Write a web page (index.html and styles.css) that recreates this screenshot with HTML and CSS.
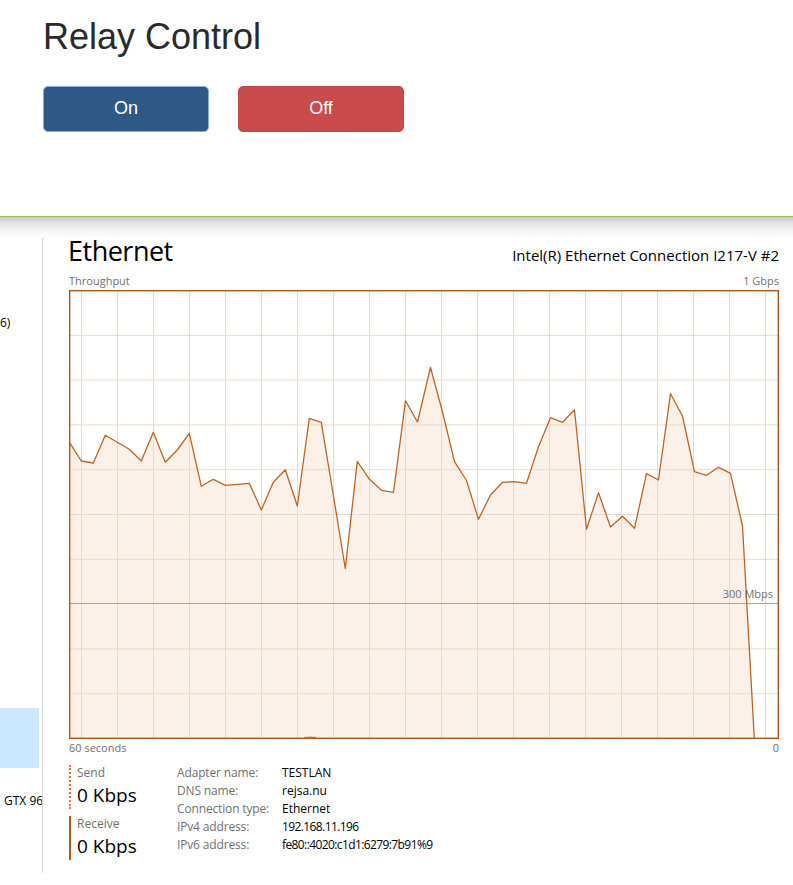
FILE: index.html
```html
<!DOCTYPE html>
<html lang="en">
<head>
<meta charset="utf-8">
<title>Relay Control</title>
<link rel="stylesheet" href="styles.css">
</head>
<body>
<section class="relay">
  <h1 class="relay-title">Relay Control</h1>
  <div class="relay-buttons">
    <button class="btn btn-on">On</button>
    <button class="btn btn-off">Off</button>
  </div>
</section>
<section class="tm">
  <div class="tm-body">
    <aside class="tm-side">
      <div class="side-text side-first">6)</div>
      <div class="side-selected"></div>
      <div class="side-text side-gpu">GTX 960</div>
    </aside>
    <main class="tm-main">
      <div class="tm-header">
        <div class="tm-title">Ethernet</div>
        <div class="tm-device">Intel(R) Ethernet Connection I217-V #2</div>
      </div>
      <div class="tm-axis tm-axis-top"><span>Throughput</span><span>1 Gbps</span></div>
      <svg class="tm-chart" width="710" height="450" viewBox="69 290 710 450" xmlns="http://www.w3.org/2000/svg">
        <rect x="69" y="290" width="710" height="450" fill="#ffffff"/>
        <polygon fill="#fcf1e8" points="69,441.7 81.3,461 93.3,463 105.3,435.3 117.3,442.3 129.3,449.3 141.3,461 153.3,432.3 165.3,462.3 177.3,450 189.3,433.3 201.3,486.3 213.3,479.3 225.3,485.3 237.3,484.3 249.3,483.3 261.3,510 273.3,482.3 285.3,469.7 297.3,506 309.3,418.3 321.3,422.3 333.3,495 345.3,568.5 357.3,461.5 369.5,479.3 381.5,490.3 393.5,492.3 405.5,400.7 417.5,422 430.5,367.5 442.5,412 454.5,461.7 466.5,480.5 478.5,519.3 490.5,495 502.5,482.3 514.5,481.7 526.5,483.3 538.5,446.7 550.5,417.7 562.5,422.3 574.5,409.7 586.5,529.3 598.5,492.7 610.5,527 622.5,516.3 634.5,528.3 646.5,473.7 658.5,480 670.5,393.7 682.5,416 694.5,471.7 706.5,475.3 718.5,467.3 730.5,473.3 742.5,526 754.3,738.5 69,738.5"/>
        <g stroke="#ead9c8" stroke-width="1" fill="none">
          <path d="M81.5 290V739M117.5 290V739M153.5 290V739M189.5 290V739M225.5 290V739M261.5 290V739M297.5 290V739M333.5 290V739M369.5 290V739M405.5 290V739M441.5 290V739M477.5 290V739M513.5 290V739M549.5 290V739M585.5 290V739M621.5 290V739M657.5 290V739M693.5 290V739M729.5 290V739M765.5 290V739"/>
          <path d="M69 335.3H779M69 380.1H779M69 424.9H779M69 469.7H779M69 514.5H779M69 559.3H779M69 648.9H779M69 693.7H779"/>
        </g>
        <path d="M69 603.5H779" stroke="#d59a6c" stroke-width="1.2" fill="none"/>
        <polyline fill="none" stroke="#c0641c" stroke-width="1.3" stroke-linejoin="round" points="69,441.7 81.3,461 93.3,463 105.3,435.3 117.3,442.3 129.3,449.3 141.3,461 153.3,432.3 165.3,462.3 177.3,450 189.3,433.3 201.3,486.3 213.3,479.3 225.3,485.3 237.3,484.3 249.3,483.3 261.3,510 273.3,482.3 285.3,469.7 297.3,506 309.3,418.3 321.3,422.3 333.3,495 345.3,568.5 357.3,461.5 369.5,479.3 381.5,490.3 393.5,492.3 405.5,400.7 417.5,422 430.5,367.5 442.5,412 454.5,461.7 466.5,480.5 478.5,519.3 490.5,495 502.5,482.3 514.5,481.7 526.5,483.3 538.5,446.7 550.5,417.7 562.5,422.3 574.5,409.7 586.5,529.3 598.5,492.7 610.5,527 622.5,516.3 634.5,528.3 646.5,473.7 658.5,480 670.5,393.7 682.5,416 694.5,471.7 706.5,475.3 718.5,467.3 730.5,473.3 742.5,526 754.3,738.5"/>
        <path d="M304 737.6Q310 736.6 316 737.6" stroke="#e07a34" stroke-width="1.2" fill="none"/>
        <rect x="69.7" y="290.7" width="708.6" height="447.6" fill="none" stroke="#b3560f" stroke-width="1.4"/>
        <text x="773" y="598" text-anchor="end" class="chart-label">300 Mbps</text>
      </svg>
      <div class="tm-axis tm-axis-bottom"><span>60 seconds</span><span>0</span></div>
      <div class="tm-stats">
        <div class="tm-rates">
          <div class="rate rate-send">
            <div class="rate-label">Send</div>
            <div class="rate-value">0 Kbps</div>
          </div>
          <div class="rate rate-recv">
            <div class="rate-label">Receive</div>
            <div class="rate-value">0 Kbps</div>
          </div>
        </div>
        <dl class="tm-details">
          <dt>Adapter name:</dt><dd>TESTLAN</dd>
          <dt>DNS name:</dt><dd>rejsa.nu</dd>
          <dt>Connection type:</dt><dd>Ethernet</dd>
          <dt>IPv4 address:</dt><dd class="num">192.168.11.196</dd>
          <dt>IPv6 address:</dt><dd class="num">fe80::4020:c1d1:6279:7b91%9</dd>
        </dl>
      </div>
    </main>
  </div>
</section>
</body>
</html>
```

FILE: styles.css
```css
html, body {
  margin: 0;
  padding: 0;
  background: #ffffff;
}

body {
  width: 793px;
  height: 885px;
  overflow: hidden;
}

.relay {
  height: 217px;
  box-sizing: border-box;
  padding: 17px 43px 0;
  border-bottom: 1px solid #8ec84a;
  font-family: "Liberation Sans", Arial, sans-serif;
}

.relay-title {
  margin: 0;
  font-size: 36px;
  line-height: 39.6px;
  font-weight: 400;
  color: #2a2a2a;
}

.relay-buttons {
  display: flex;
  gap: 29px;
  margin-top: 29px;
}

.btn {
  width: 166px;
  height: 46px;
  box-sizing: border-box;
  border-radius: 5px;
  font-family: "Liberation Sans", Arial, sans-serif;
  font-size: 18px;
  color: #ffffff;
  padding: 0;
}

.btn-on {
  background: #2e5886;
  border: 1px solid #89a9e6;
}

.btn-off {
  background: #c94b4b;
  border: 1px solid #c44545;
}

.tm {
  height: 668px;
  padding-top: 21px;
  box-sizing: border-box;
  background: linear-gradient(#c9c9c9 0px, #e2e2e2 6px, #f4f4f4 13px, #ffffff 22px);
  font-family: "Open Sans", "Noto Sans", sans-serif;
  color: #000000;
}

.tm-body {
  display: flex;
  height: 635px;
}

.tm-side {
  width: 42px;
  flex: none;
  border-right: 1px solid #dadada;
  overflow: hidden;
  padding-top: 77px;
  box-sizing: content-box;
}

.side-text {
  font-size: 12px;
  line-height: 16px;
  white-space: nowrap;
  color: #000;
}

.side-selected {
  width: 39px;
  height: 60px;
  margin-top: 377px;
  background: #cce8ff;
}

.side-gpu {
  margin-top: 25px;
  padding-left: 4px;
}

.tm-main {
  width: 710px;
  padding-left: 26px;
}

.tm-header {
  display: flex;
  justify-content: space-between;
  align-items: baseline;
  height: 26px;
}

.tm-title {
  font-size: 27px;
  line-height: 26px;
  margin-left: -1px;
  letter-spacing: -0.5px;
}

.tm-device {
  font-size: 15px;
  line-height: 18px;
}

.tm-axis {
  display: flex;
  justify-content: space-between;
  font-size: 11px;
  line-height: 14px;
  color: #6f6f6f;
}

.tm-axis-top {
  margin-top: 10px;
  margin-bottom: 2px;
}

.tm-axis-bottom {
  margin-top: 1px;
}

.tm-chart {
  display: block;
}

.chart-label {
  font-family: "Open Sans", "Noto Sans", sans-serif;
  font-size: 11px;
  fill: #6f6f6f;
}

.tm-stats {
  display: flex;
}

.tm-rates {
  width: 108px;
  flex: none;
  padding-top: 10px;
}

.rate {
  padding-left: 6px;
}

.rate-send {
  border-left: 2px dotted #e27632;
}

.rate-recv {
  margin-top: 7px;
  border-left: 2px solid #b3560f;
}

.rate-label {
  font-size: 12px;
  line-height: 16px;
  color: #6f6f6f;
}

.rate-value {
  font-size: 19px;
  line-height: 28px;
}

.tm-details {
  display: grid;
  grid-template-columns: 105px auto;
  grid-auto-rows: 18px;
  margin: 0;
  padding-top: 9px;
  font-size: 12px;
  line-height: 18px;
}

.tm-details dt {
  color: #6f6f6f;
  letter-spacing: -0.15px;
}

.tm-details dd {
  margin: 0;
  color: #000;
}

.tm-details .num {
  letter-spacing: -0.6px;
}
```
